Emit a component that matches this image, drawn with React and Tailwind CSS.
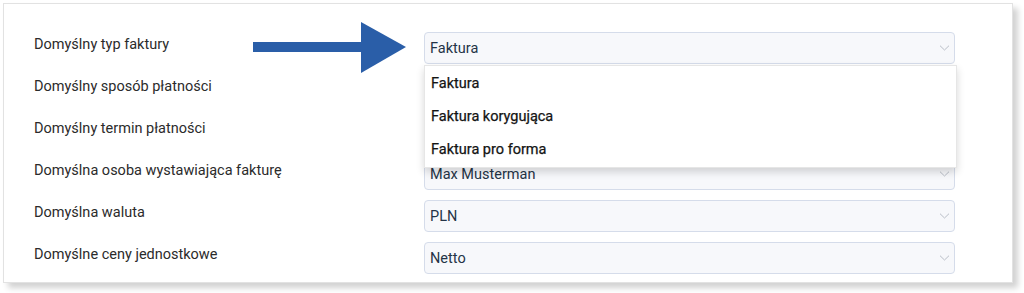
import React from "react";

const Chevron = () => (
  <svg width="11" height="7" viewBox="0 0 11 7" className="absolute right-[0px] top-1/2 -translate-y-1/2" fill="none">
    <path d="M1 1.2 L5.5 5.5 L10 1.2" stroke="#b9bec7" strokeWidth="1" />
  </svg>
);

const Select = ({ value, children }) => (
  <div className="relative w-[531px] h-[32px] rounded-[4px] border border-[#d5dcea] bg-[#f7f8fb] flex items-center pl-[5px] pt-[1px] text-[14.5px] text-[#243447]">
    <span>{value}</span>
    <div className="absolute right-[4px] top-0 h-full w-[14px]"><Chevron /></div>
    {children}
  </div>
);

const rows = [
  ["Domyślny typ faktury", "Faktura"],
  ["Domyślny sposób płatności", ""],
  ["Domyślny termin płatności", ""],
  ["Domyślna osoba wystawiająca fakturę", "Max Musterman"],
  ["Domyślna waluta", "PLN"],
  ["Domyślne ceny jednostkowe", "Netto"],
];

export default function App() {
  return (
    <div className="w-[1024px] h-[293px] bg-white pt-[3px] pl-[3px]" style={{ fontFamily: "Roboto, 'Liberation Sans', sans-serif" }}>
      <div className="relative w-[1010px] h-[280px] border border-[#e2e2e2] bg-white shadow-[5px_5px_6px_rgba(0,0,0,0.18)] pl-[30px] pt-[28px] flex flex-col gap-[10px]">
        {rows.map(([label, value], i) => (
          <div key={i} className="flex items-start">
            <div className="w-[390px] pt-[3px] text-[14.5px] leading-[20px] text-[#2b2b2b]">{label}</div>
            <Select value={value}>
              {i === 0 && (
                <div className="absolute left-[-1px] top-[32px] z-10 w-[533px] h-[103px] pt-[1px] bg-white border border-[#e6e6e6] shadow-[0_4px_8px_rgba(0,0,0,0.16)] flex flex-col text-[14.5px] text-[#141414]">
                  {["Faktura", "Faktura korygująca", "Faktura pro forma"].map((o) => (
                    <div key={o} className="h-[34px] flex items-center pl-[6px] [-webkit-text-stroke:0.25px_#141414]">{o}</div>
                  ))}
                </div>
              )}
            </Select>
          </div>
        ))}
        <svg className="absolute left-[249px] top-[18px]" width="154" height="52" viewBox="0 0 154 52">
          <rect x="0" y="20" width="112" height="10" fill="#2a5ea8" />
          <polygon points="108,0 153,25 108,51" fill="#2a5ea8" />
        </svg>
      </div>
    </div>
  );
}
